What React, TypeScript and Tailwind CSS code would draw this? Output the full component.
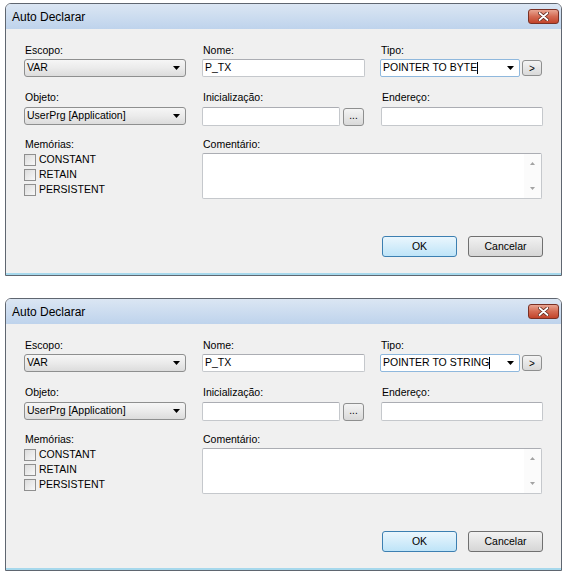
import React from 'react';

const Arrow = ({ className = '' }: { className?: string }) => (
    <svg width="7" height="4" viewBox="0 0 7 4" className={className}>
        <path d="M0 0h7L3.5 4z" fill="#000" />
    </svg>
);

const Field = ({ value, className = '' }: { value?: string; className?: string }) => (
    <div className={`flex items-center bg-white border border-[#c5c8cc] border-t-[#abadb3] rounded-[2px] pl-[2px] ${className}`}>
        {value}
    </div>
);

const Select = ({ value }: { value: string }) => (
    <div className="flex items-center justify-between h-[18px] w-[162px] border border-[#8e8f8f] rounded-[3px] bg-gradient-to-b from-[#f6f6f6] via-[#ebebeb] to-[#dcdcdc] pl-[2px] pr-[5px]">
        <span>{value}</span>
        <Arrow />
    </div>
);

const Label = ({ children }: { children: React.ReactNode }) => (
    <div className="h-[14px] leading-[14px] pl-[1px] text-[10.5px]">{children}</div>
);

const Check = ({ label }: { label: string }) => (
    <div className="flex items-center h-[15px] gap-[3px]">
        <div className="w-[12px] h-[12px] border border-[#8f8f8f] bg-gradient-to-br from-[#dcdcdc] to-[#f8f8f8]" />
        <span>{label}</span>
    </div>
);

const SmallBtn = ({ children, className = '' }: { children: React.ReactNode; className?: string }) => (
    <div className={`flex items-center justify-center border border-[#8e8f8f] rounded-[3px] bg-gradient-to-b from-[#f4f4f4] to-[#d9d9d9] text-[10px] ${className}`}>
        {children}
    </div>
);

const AutoDeclarar = ({ tipo }: { tipo: string }) => {
    return (
        <div className="w-[557px] h-[273px] flex flex-col border border-[#5f6670] rounded-t-[6px] overflow-hidden">
            {/* title bar */}
            <div className="h-[25px] flex items-start justify-between bg-gradient-to-b from-[#dbe6f3] to-[#bed3ec] pl-[6px] pr-[2px]">
                <span className="text-[12px] leading-[25px] mt-[1px]">Auto Declarar</span>
                <div className="mt-[5px] w-[31px] h-[15px] flex items-center justify-center rounded-[3px] border border-[#7a3024] bg-gradient-to-b from-[#e8a592] via-[#d46a52] to-[#c2432a]">
                    <svg width="11" height="9" viewBox="0 0 11 9">
                        <path d="M1.5 1l8 7M9.5 1l-8 7" stroke="#5a2418" strokeWidth="3.4" strokeLinecap="round" />
                        <path d="M1.5 1l8 7M9.5 1l-8 7" stroke="#fff" strokeWidth="1.8" strokeLinecap="round" />
                    </svg>
                </div>
            </div>

            <div className="flex-1 flex flex-col bg-[#f0f0f0] border-b-2 border-[#a6d8ec] pl-[18px] pr-[18px] pt-[14px]">
                {/* row 1 */}
                <div className="flex gap-[16px]">
                    <div className="w-[162px]">
                        <Label>Escopo:</Label>
                        <div className="mt-[2px]"><Select value="VAR" /></div>
                    </div>
                    <div className="w-[163px]">
                        <Label>Nome:</Label>
                        <Field value="P_TX" className="mt-[2px] h-[18px] w-[163px]" />
                    </div>
                    <div className="w-[162px] ml-[-1px]">
                        <Label>Tipo:</Label>
                        <div className="mt-[2px] flex items-center gap-[2px]">
                            <div className="flex items-center justify-between h-[18px] w-[140px] bg-white border border-[#8fb8dd] rounded-[2px] pl-[2px] pr-[5px]">
                                <span className="flex items-center">
                                    {tipo}
                                    <span className="inline-block w-px h-[12px] bg-black" />
                                </span>
                                <Arrow />
                            </div>
                            <SmallBtn className="w-[20px] h-[16px]">&gt;</SmallBtn>
                        </div>
                    </div>
                </div>

                {/* row 2 */}
                <div className="flex gap-[16px] mt-[13px]">
                    <div className="w-[162px]">
                        <Label>Objeto:</Label>
                        <div className="mt-[3px]"><Select value="UserPrg [Application]" /></div>
                    </div>
                    <div className="w-[163px]">
                        <Label>Inicialização:</Label>
                        <div className="mt-[3px] flex items-end gap-[3px]">
                            <Field className="h-[19px] w-[138px]" />
                            <SmallBtn className="w-[21px] h-[18px] pb-[3px]">...</SmallBtn>
                        </div>
                    </div>
                    <div className="w-[162px]">
                        <Label>Endereço:</Label>
                        <Field className="mt-[3px] h-[19px] w-[162px]" />
                    </div>
                </div>

                {/* row 3 */}
                <div className="flex gap-[16px] mt-[11px]">
                    <div className="w-[162px]">
                        <Label>Memórias:</Label>
                        <div className="mt-[1px]">
                            <Check label="CONSTANT" />
                            <Check label="RETAIN" />
                            <Check label="PERSISTENT" />
                        </div>
                    </div>
                    <div className="w-[340px]">
                        <Label>Comentário:</Label>
                        <div className="mt-[2px] h-[46px] flex bg-white border border-[#c5c8cc] border-t-[#abadb3] rounded-[2px]">
                            <div className="flex-1" />
                            <div className="w-[17px] flex flex-col items-center justify-between py-[8px] bg-[#fbfbfb]">
                                <svg width="5" height="3" viewBox="0 0 5 3"><path d="M2.5 0L5 3H0z" fill="#a3a3a3" /></svg>
                                <svg width="5" height="3" viewBox="0 0 5 3"><path d="M0 0h5L2.5 3z" fill="#a3a3a3" /></svg>
                            </div>
                        </div>
                    </div>
                </div>

                {/* buttons */}
                <div className="flex justify-end gap-[11px] mt-[37px]">
                    <div className="w-[75px] h-[21px] flex items-center justify-center rounded-[3px] border border-[#3c7fb1] bg-gradient-to-b from-[#eaf6fd] to-[#bee4f8]">
                        OK
                    </div>
                    <div className="w-[75px] h-[21px] flex items-center justify-center rounded-[3px] border border-[#707070] bg-gradient-to-b from-[#f2f2f2] to-[#d6d6d6]">
                        Cancelar
                    </div>
                </div>
            </div>
        </div>
    );
};

export default function App() {
    return (
        <div className="min-h-[575px] bg-white pt-[3px] pl-[5px] flex flex-col gap-[22px] font-['Liberation_Sans',Arial,sans-serif] text-[10.5px] text-black">
            <AutoDeclarar tipo="POINTER TO BYTE" />
            <AutoDeclarar tipo="POINTER TO STRING" />
        </div>
    );
}
